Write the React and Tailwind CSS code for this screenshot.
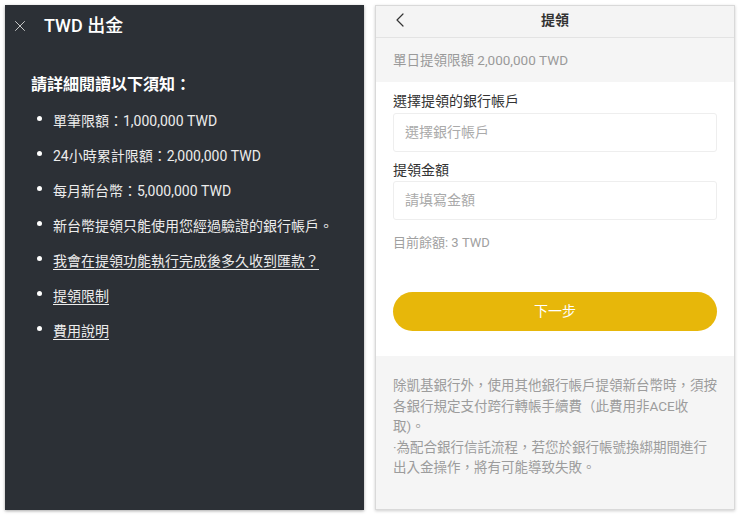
import { X, ChevronLeft } from "lucide-react";

const notes = [
  { text: "單筆限額：1,000,000 TWD" },
  { text: "24小時累計限額：2,000,000 TWD" },
  { text: "每月新台幣：5,000,000 TWD" },
  { text: "新台幣提領只能使用您經過驗證的銀行帳戶。" },
  { text: "我會在提領功能執行完成後多久收到匯款？", link: true },
  { text: "提領限制", link: true },
  { text: "費用說明", link: true },
];

function NoticePanel() {
  return (
    <div className="w-[359px] h-[505px] bg-[#2c3036] text-[#ececec] shadow-[0_1px_3px_rgba(0,0,0,0.35)]">
      <div className="flex items-center h-[40px] pl-[6px] pt-[1px]">
        <X size={18} strokeWidth={1.2} className="text-[#d8d8d8]" />
        <span className="ml-[15px] text-[18px] font-medium text-white">TWD 出金</span>
      </div>
      <h2 className="mt-[28px] pl-[26px] text-[16px] leading-[24px] font-bold text-white">
        請詳細閱讀以下須知：
      </h2>
      <ul className="mt-[7px]">
        {notes.map((n) => (
          <li key={n.text} className="flex items-center h-[35px] pl-[32px]">
            <span className="w-[5px] h-[5px] rounded-full bg-white -mt-[6px]" />
            <span className={"ml-[11px] text-[14px] " + (n.link ? "underline underline-offset-[3px]" : "")}>
              {n.text}
            </span>
          </li>
        ))}
      </ul>
    </div>
  );
}

function WithdrawPanel() {
  return (
    <div className="w-[360px] h-[505px] flex flex-col bg-[#f5f5f5] border border-[#d9d9d9] shadow-[0_1px_3px_rgba(0,0,0,0.2)]">
      <div className="relative flex items-center justify-center h-[32px] border-b border-[#e3e3e3] bg-[#f4f4f4]">
        <ChevronLeft size={24} strokeWidth={1.2} className="absolute left-[12px] top-[2px] text-[#333]" />
        <span className="-mt-[2px] text-[14px] font-bold text-[#333]">提領</span>
      </div>
      <div className="flex items-center h-[44px] px-[17px] text-[13.5px] text-[#9a9a9a]">
        單日提領限額 2,000,000 TWD
      </div>
      <div className="bg-white px-[17px] pt-[9px] pb-[25px]">
        <div className="text-[14px] leading-[20px] text-[#333]">選擇提領的銀行帳戶</div>
        <div className="mt-[2px] h-[39px] flex items-center px-[11px] border border-[#eeeeee] rounded-[3px] text-[14px] text-[#aaa]">
          選擇銀行帳戶
        </div>
        <div className="mt-[8px] text-[14px] leading-[20px] text-[#333]">提領金額</div>
        <div className="mt-[1px] h-[39px] flex items-center px-[11px] border border-[#eeeeee] rounded-[3px] text-[14px] text-[#aaa]">
          請填寫金額
        </div>
        <div className="mt-[13px] text-[13px] leading-[20px] text-[#a0a0a0]">目前餘額: 3 TWD</div>
        <button className="mt-[39px] w-full h-[39px] rounded-full bg-[#e7b70a] text-white text-[14px]">
          下一步
        </button>
      </div>
      <div className="px-[17px] pt-[19px] text-[13.5px] leading-[20.5px] text-[#9c9c9c]">
        <p>除凱基銀行外，使用其他銀行帳戶提領新台幣時，須按各銀行規定支付跨行轉帳手續費（此費用非ACE收取)。</p>
        <p>·為配合銀行信託流程，若您於銀行帳號換綁期間進行出入金操作，將有可能導致失敗。</p>
      </div>
    </div>
  );
}

export default function App() {
  return (
    <div className="w-[740px] h-[516px] bg-white flex gap-[11px] pt-[5px] pl-[5px] font-['Roboto','Noto_Sans_CJK_TC',sans-serif]">
      <NoticePanel />
      <WithdrawPanel />
    </div>
  );
}
